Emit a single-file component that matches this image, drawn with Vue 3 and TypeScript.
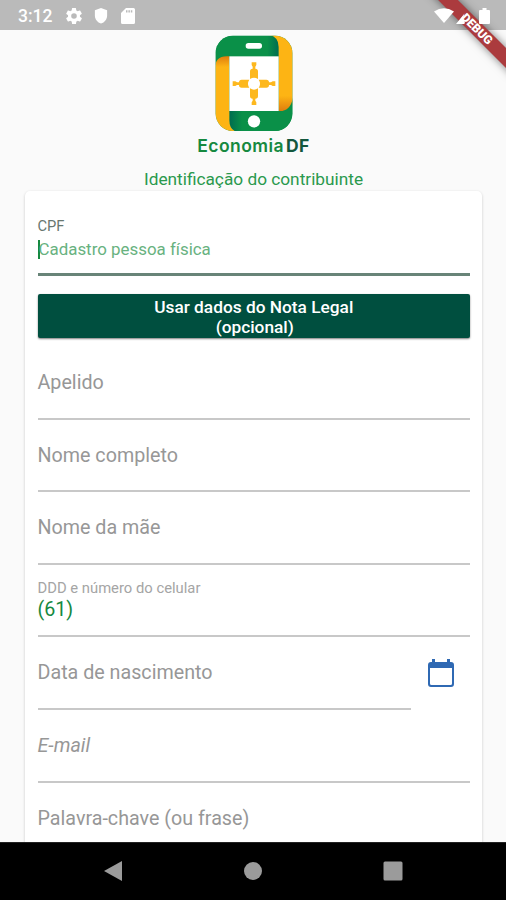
<script setup lang="ts">
import { ref } from 'vue'

interface Field {
  label: string
  value?: string
  italic?: boolean
  calendar?: boolean
}

const cpf = ref('')
const fields = ref<Field[]>([
  { label: 'Apelido' },
  { label: 'Nome completo' },
  { label: 'Nome da mãe' },
  { label: 'DDD e número do celular', value: '(61)' },
  { label: 'Data de nascimento', calendar: true },
  { label: 'E-mail', italic: true },
  { label: 'Palavra-chave (ou frase)' },
])
const arms = [0, 90, 180, 270]
</script>

<template>
  <div class="screen">
    <header class="status">
      <span class="clock">3:12</span>
      <svg class="gear" viewBox="2 2 20 20"><path d="M19.4 13a7.500 7.500 0 0 0 0-2l2.100-1.650a.5.5 0 0 0 .12-.64l-2-3.460a.5.5 0 0 0-.61-.22l-2.490 1a7.300 7.300 0 0 0-1.690-.98l-.38-2.650A.5.5 0 0 0 14 2h-4a.5.5 0 0 0-.49.42l-.38 2.650c-.61.25-1.170.58-1.690.98l-2.490-1a.5.5 0 0 0-.61.22l-2 3.460a.5.5 0 0 0 .12.64L4.600 11a7.500 7.500 0 0 0 0 2l-2.110 1.650a.5.5 0 0 0-.12.640l2 3.460c.12.220.39.300.61.220l2.490-1c.52.400 1.080.730 1.690.980l.38 2.650c.03.240.24.420.49.420h4c.25 0 .46-.18.49-.42l.38-2.650c.61-.25 1.170-.58 1.690-.98l2.490 1c.22.080.49 0 .61-.22l2-3.460a.5.5 0 0 0-.12-.64zM12 15.500a3.500 3.500 0 1 1 0-7 3.500 3.500 0 0 1 0 7z" /></svg>
      <svg class="shield" viewBox="0 0 14 17"><path d="M7 0l6.500 2.500V8c0 4-2.800 7.400-6.500 8.600C3.300 15.400.5 12 .5 8V2.500z" /></svg>
      <svg class="sd" viewBox="0 0 14 16"><path fill-rule="evenodd" d="M5 0h7.500Q14 0 14 1.500v13q0 1.500-1.500 1.500h-11Q0 16 0 14.500V5zM5 2.300v2.200h1.500V2.300zm2.400 0v2.200h1.500V2.300zm2.400 0v2.200h1.500V2.300z" /></svg>
      <span class="grow"></span>
      <svg class="wifi" viewBox="0 0 20 15"><path d="M0 3.500Q10-3 20 3.500L10 15z" /></svg>
      <svg class="signal" viewBox="0 0 16 16"><path d="M8.500 5.500L7 10l2 5-1 1H0z" /></svg>
      <svg class="battery" viewBox="0 0 11 16"><path d="M3.500 0h4v2H10q1 0 1 1v12q0 1-1 1H1q-1 0-1-1V3q0-1 1-1h2.500z" /></svg>
    </header>
    <div class="banner"><span>DEBUG</span></div>

    <main class="content">
      <div class="brand">
        <svg class="logo" viewBox="104 15 234 291">
          <defs>
            <clipPath id="phone"><rect x="106" y="17" width="230" height="286" rx="52" /></clipPath>
            <linearGradient id="topShade" x1="0" x2="1">
              <stop offset=".82" stop-color="#0a9048" /><stop offset="1" stop-color="#006c50" />
            </linearGradient>
            <linearGradient id="bottomShade" x1="0" x2="1">
              <stop offset="0" stop-color="#006c50" /><stop offset=".2" stop-color="#0a9048" />
            </linearGradient>
            <linearGradient id="leftShade" x1="0" y1="0" x2="0" y2="1">
              <stop offset="0" stop-color="#df7d0d" /><stop offset=".14" stop-color="#fdb414" />
            </linearGradient>
            <linearGradient id="rightShade" x1="0" y1="0" x2="0" y2="1">
              <stop offset=".8" stop-color="#fdb414" /><stop offset="1" stop-color="#df7d0d" />
            </linearGradient>
          </defs>
          <g clip-path="url(#phone)">
            <rect x="104" y="15" width="234" height="291" fill="#0a9048" />
            <path d="M106 17h159q30 0 30 34v30H146q-30 0-40 24z" fill="url(#topShade)" />
            <path d="M266 15h72v198q0 30-32 30h-11V51q0-31-29-36z" fill="url(#rightShade)" />
            <path d="M338 203v102H176q-29 0-29-34v-28h152q31 0 39-40z" fill="url(#bottomShade)" />
            <path d="M104 116q0-37 35-37h8v192q0 32 27 35h-70z" fill="url(#leftShade)" />
            <rect x="147" y="79" width="148" height="164" fill="#fff" />
          </g>
          <rect x="196" y="39" width="49" height="17" rx="8" fill="#fff" />
          <circle cx="221" cy="274" r="18.500" fill="#fff" />
          <g fill="#fdb81e">
            <g v-for="angle in arms" :key="angle" :transform="`translate(221 161) rotate(${angle})`">
              <path d="M-12-14v-23q0-8 8-8v-6l-3-5v-8H7v8l-3 5v6q8 0 8 8v23q-12-8-24 0z" />
            </g>
          </g>
        </svg>
        <p class="name"><span>Economia</span><b>DF</b></p>
      </div>
      <h1 class="title">Identificação do contribuinte</h1>

      <form class="card" @submit.prevent>
        <label class="cpf">
          <span class="small">CPF</span>
          <span class="hint"><i class="caret"></i>{{ cpf || 'Cadastro pessoa física' }}</span>
        </label>
        <button class="cta" type="button"><span>Usar dados do Nota Legal</span><br /><span class="opt">(opcional)</span></button>
        <div v-for="field in fields" :key="field.label" class="row">
          <label class="field" :class="{ filled: field.value, italic: field.italic }">
            <span class="label">{{ field.label }}</span>
            <span v-if="field.value" class="value">{{ field.value }}</span>
          </label>
          <span v-if="field.calendar" class="picker">
            <svg viewBox="0 0 26 28"><path d="M4 0h3v3h12V0h3v3h1q3 0 3 3v19q0 3-3 3H3q-3 0-3-3V6q0-3 3-3h1zM2 9v15.500q0 1.500 1.500 1.500h19q1.500 0 1.500-1.500V9z" fill="#2f69b3" fill-rule="evenodd" /></svg>
          </span>
        </div>
      </form>
    </main>

    <nav class="nav">
      <svg viewBox="0 0 20 22"><path d="M19 1v20L1 11z" /></svg>
      <svg viewBox="0 0 20 22"><circle cx="10" cy="11" r="9" /></svg>
      <svg viewBox="0 0 20 22"><rect x=".5" y="1.500" width="19" height="19" rx="1.500" /></svg>
    </nav>
  </div>
</template>

<style>
body { margin: 0; overflow: hidden; }
</style>

<style scoped>
* { box-sizing: border-box; }
.screen { position: relative; width: 506px; height: 900px; overflow: hidden; display: flex; flex-direction: column; background: #fafafa; font-family: Roboto, sans-serif; }
.status { height: 30px; flex: none; display: flex; align-items: center; background: #bababa; padding: 1px 16px 0 18px; color: #fff; }
.status svg { position: relative; z-index: 2; fill: #fff; flex: none; }
.clock { width: 48px; font-size: 17.500px; font-weight: 500; line-height: 28px; }
.gear { width: 16px; height: 16px; }
.shield { width: 14px; height: 16px; margin-left: 12px; }
.sd { width: 14px; height: 16px; margin-left: 13px; }
.grow { flex: 1; }
.wifi { width: 20px; height: 15px; }
.signal { width: 16px; height: 16px; margin-left: 2px; }
.battery { width: 11px; height: 16px; margin-left: 7px; }
.banner { position: absolute; z-index: 1; left: 417px; top: 22px; width: 120px; height: 14px; transform: rotate(45deg); background: #ab3b3e; box-shadow: 0 0 8px rgba(0, 0, 0, .5); color: #fff; text-align: center; font-size: 12px; font-weight: 900; line-height: 14px; }
.content { flex: 1; min-height: 0; overflow: hidden; display: flex; flex-direction: column; padding: 5px 24px 0 25px; }
.brand { height: 124px; flex: none; display: flex; flex-direction: column; align-items: center; }
.logo { width: 78px; height: 97px; }
.name { margin: 3px 0 0; font-family: Inter, sans-serif; font-size: 17.500px; line-height: 22px; letter-spacing: .45px; font-weight: 600; color: #16893f; white-space: nowrap; }
.name b { margin-left: 2px; font-weight: 700; color: #13573d; }
.title { margin: 10px 0 0; height: 22px; flex: none; text-align: center; font-size: 17.250px; font-weight: 400; line-height: 21px; color: #2a994d; white-space: nowrap; }
.card { flex: none; height: 700px; padding: 0 12px 0 12.500px; background: #fff; border-radius: 5px; box-shadow: 0 1px 3px rgba(0, 0, 0, .2); }
.cpf { display: flex; flex-direction: column; height: 85px; padding-top: 26px; border-bottom: 3px solid #688478; }
.small { font-size: 14.700px; line-height: 18px; color: #68776f; }
.hint { display: flex; align-items: center; margin-top: 4px; font-size: 16.900px; line-height: 20px; color: #68b27f; white-space: nowrap; }
.caret { width: 2px; height: 19px; margin-right: -1px; background: #16893f; }
.cta { display: block; width: 100%; height: 44px; margin: 18px 0 9px; padding: 3px 0 1px; border: 0; border-radius: 2px; background: #004f3f; box-shadow: 0 1px 2px rgba(0, 0, 0, .5); font: 500 17.300px/20px Roboto, sans-serif; color: #fff; text-align: center; }
.opt { margin-left: 2px; }
.row { display: flex; height: 72.600px; }
.field { flex: 1; display: flex; flex-direction: column; padding-top: 23px; border-bottom: 2px solid #c8c8c8; }
.label { font-size: 19.700px; line-height: 26px; color: #979797; white-space: nowrap; }
.italic .label { font-style: italic; }
.filled { padding-top: 14px; }
.filled .label { font-size: 14.800px; line-height: 18px; color: #a5a5a5; }
.value { font-size: 19.700px; line-height: 26px; color: #16893f; }
.picker { width: 59px; display: flex; align-items: center; justify-content: center; padding-bottom: 2px; }
.picker svg { width: 26px; height: 28px; }
.nav { height: 58px; flex: none; display: flex; justify-content: center; align-items: center; gap: 120px; padding-bottom: 2px; background: #000; border-top: 1px solid #222; }
.nav svg { width: 20px; height: 22px; fill: #9b9b9b; }
</style>
